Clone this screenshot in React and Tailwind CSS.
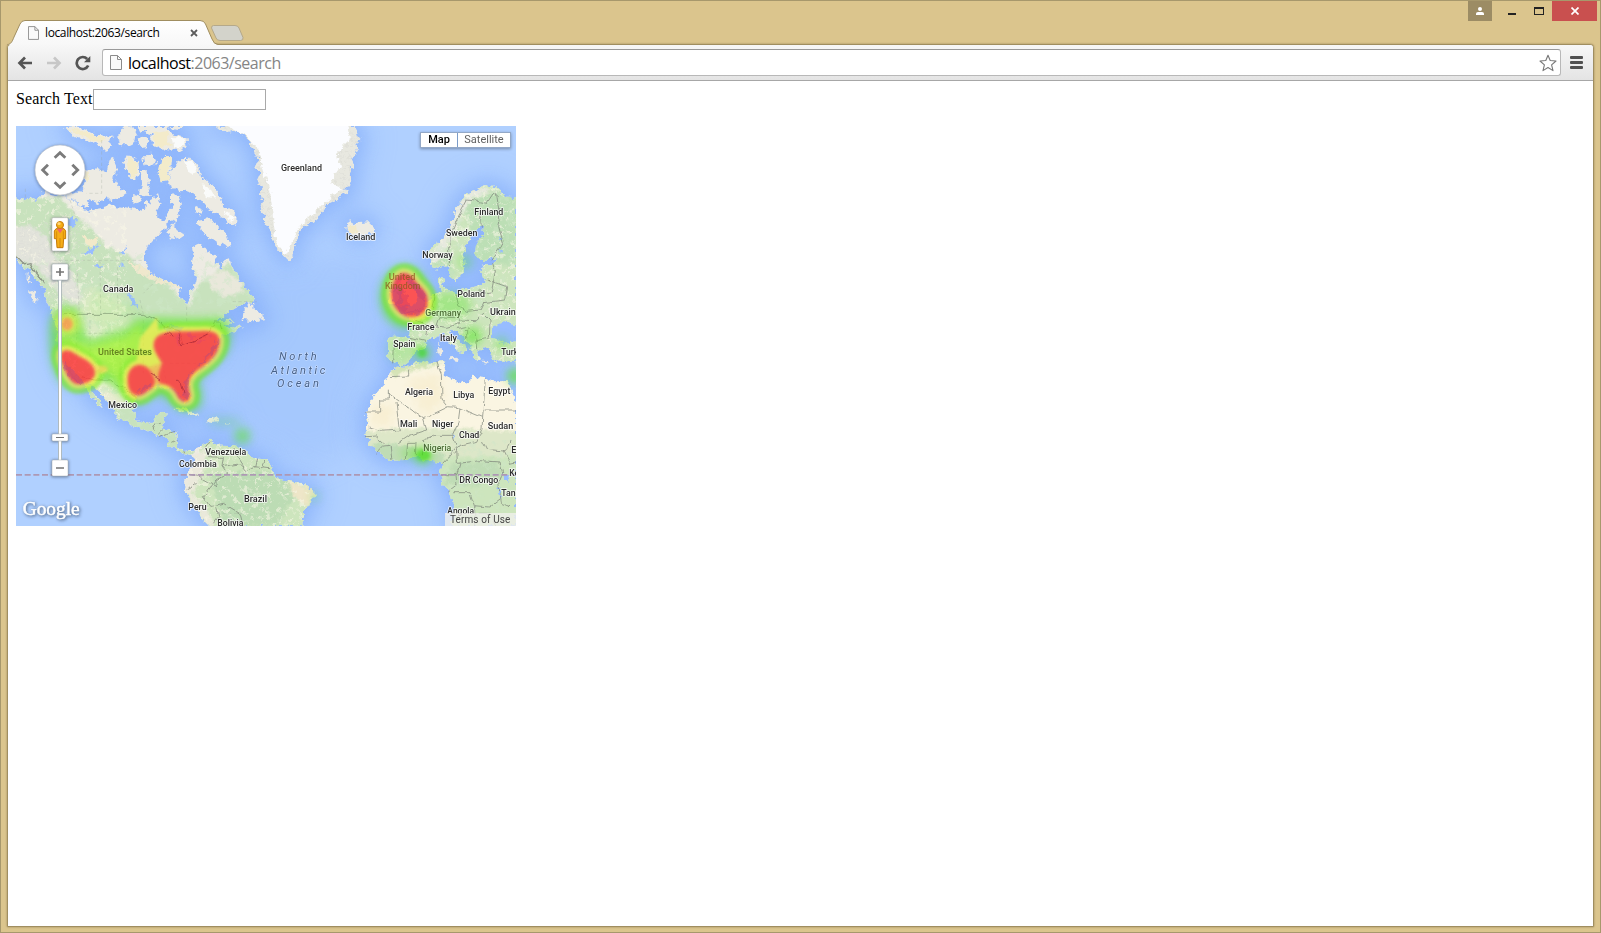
import React from "react";

const NORTH_AMERICA =
  "M0 222 L30 236 45 244 60 230 78 240 95 222 110 214 122 222 150 228 172 232 192 240 215 262 238 272 262 266 290 262 300 250 312 258 350 262 375 268 392 272 408 262 402 246 414 240 420 255 430 236 444 222 452 250 440 270 442 292 462 300 475 296 472 318 455 330 440 350 415 378 405 400 405 424 420 458 440 470 465 480 490 492 508 496 512 520 515 540 532 553 542 530 538 515 552 500 558 470 545 440 550 400 545 382 562 374 580 378 592 396 615 402 618 430 632 446 645 420 660 415 664 440 682 458 686 484 700 492 712 510 732 530 725 545 690 556 668 568 640 585 622 602 640 604 650 598 668 600 645 618 665 630 690 612 695 622 655 642 640 640 625 658 628 680 612 705 590 730 562 762 540 785 532 800 545 828 540 846 524 846 508 822 495 802 470 806 445 798 420 812 400 812 378 826 365 858 372 886 385 906 410 912 428 906 438 884 464 876 470 882 460 906 455 922 478 930 500 938 500 960 502 980 520 990 540 986 552 996 548 1008 520 1002 500 990 480 980 472 960 450 948 425 938 400 926 380 924 350 908 318 892 314 870 296 850 275 822 248 796 236 790 250 822 268 845 278 862 262 855 246 830 232 810 226 790 205 782 182 768 166 736 150 700 142 660 138 620 130 590 118 560 108 530 100 500 76 478 60 450 40 440 20 416 0 410 Z";
const ISLANDS = [
  "M215 150 L240 152 262 145 290 160 298 120 312 114 320 150 310 175 325 200 350 220 320 240 290 235 262 250 240 240 222 240 212 220 225 190 214 170Z",
  "M150 226 L165 212 190 222 206 215 232 232 238 262 215 258 190 236Z",
  "M165 22 L195 18 232 30 262 44 310 50 298 62 300 86 280 90 262 74 240 62 220 62 185 42Z",
  "M325 50 L340 22 368 18 380 40 375 70 352 76 330 76Z",
  "M385 60 L398 50 414 62 412 82 392 84Z",
  "M425 30 L470 26 480 40 500 46 530 55 532 78 510 90 470 88 440 82 424 60Z",
  "M380 18 L480 18 470 34 430 42 392 30Z",
  "M482 18 L520 18 512 30 490 28Z",
  "M350 106 L368 110 385 122 388 160 378 178 360 172 352 150 338 134Z",
  "M396 106 L432 104 438 130 420 140 400 136Z",
  "M392 150 L410 150 412 170 420 190 412 215 425 226 402 232 390 222 396 190Z",
  "M370 222 L390 226 395 244 380 250 368 240Z",
  "M455 112 L486 112 484 150 474 180 452 184 446 160Z",
  "M486 150 L510 118 540 116 556 128 566 148 570 172 588 178 606 196 622 216 636 236 640 260 660 266 680 290 678 318 655 308 640 290 615 280 598 268 582 248 562 240 556 222 530 212 510 214 492 205 470 190Z",
  "M480 224 L506 222 516 250 500 276 510 290 496 306 475 300 470 280 486 262 480 240Z",
  "M470 326 L490 310 500 330 520 344 515 360 498 350 480 356Z",
  "M560 260 L575 268 570 282 556 278Z",
  "M558 304 L580 300 600 296 618 310 632 326 645 336 650 352 662 366 650 384 630 372 608 356 588 350 575 330Z",
  "M700 575 L716 548 732 548 735 572 758 582 748 602 725 604 698 600Z",
  "M756 582 L762 600 752 606Z",
  "M60 510 L72 520 82 534 78 545 62 530Z",
  "M50 460 L62 476 58 486 50 478Z",
  "M490 864 L520 862 552 874 572 888 548 886 520 874Z",
  "M588 894 L615 894 626 904 605 906 590 902Z",
  "M646 906 L656 906 656 910 646 910Z",
  "M1008 306 L1024 300 1030 316 1050 306 1076 304 1095 324 1080 342 1052 350 1026 342 1010 332Z",
  "M1170 484 L1186 470 1200 480 1210 500 1225 530 1246 548 1238 566 1200 574 1186 580 1200 556 1190 530Z",
  "M1140 520 L1162 512 1168 540 1150 556 1136 550Z",
  "M1284 684 L1292 684 1294 704 1286 706Z",
  "M1320 712 L1344 710 1340 724 1322 720Z",
  "M1416 722 L1440 724 1438 728 1418 727Z",
  "M1284 662 L1290 668 1287 680Z",
];
const GREENLAND =
  "M618 18 L640 36 672 32 700 44 722 66 730 92 748 116 736 142 752 160 742 182 760 204 746 224 764 240 752 262 766 284 762 304 778 330 790 362 806 392 832 420 842 420 850 394 856 362 872 334 896 312 916 304 932 276 952 250 980 240 1016 214 1000 204 1024 196 1022 160 1030 134 1020 114 1040 96 1036 76 1054 60 1040 44 1034 18 Z";
const SOUTH_AMERICA =
  "M546 1000 L560 984 578 974 600 962 606 975 636 974 668 976 690 984 716 1006 742 1016 770 1018 784 1040 790 1068 810 1078 850 1086 884 1094 912 1112 914 1130 896 1158 882 1176 880 1218 600 1218 575 1190 556 1166 538 1138 524 1106 522 1080 534 1062 548 1040 556 1020 Z";
const AFRICA =
  "M1160 740 L1196 740 1222 728 1262 728 1302 724 1308 748 1300 766 1338 782 1372 794 1386 770 1420 774 1450 784 1490 784 1500 800 1518 840 1518 1218 1326 1218 1334 1180 1322 1120 1298 1090 1290 1060 1298 1030 1270 1026 1240 1020 1222 1008 1180 1020 1136 1022 1108 1000 1080 970 1066 944 1076 916 1068 880 1086 836 1116 804 1130 776 1146 752 Z";
const EUROPE =
  "M1518 232 L1490 230 1462 204 1440 198 1420 196 1396 214 1372 220 1354 246 1336 266 1330 296 1316 330 1308 352 1266 380 1256 404 1262 438 1280 450 1304 432 1314 436 1320 470 1340 482 1358 460 1366 430 1360 400 1372 370 1392 330 1420 314 1416 350 1398 372 1396 400 1408 420 1440 418 1460 414 1450 432 1420 434 1414 460 1426 480 1404 498 1376 504 1340 520 1310 512 1296 500 1308 474 1288 470 1286 500 1290 516 1270 526 1246 550 1228 574 1196 582 1200 602 1198 630 1200 652 1148 650 1134 660 1136 716 1156 730 1180 736 1202 720 1214 696 1244 686 1250 660 1280 650 1300 640 1314 664 1344 684 1354 704 1360 694 1376 688 1352 668 1328 644 1318 624 1340 634 1366 660 1384 684 1390 706 1402 726 1412 714 1404 694 1426 684 1444 690 1442 714 1470 724 1518 730 Z";

const LABELS = [
  ["Canada", 279, 515, 91],
  ["Greenland", 813, 152, 123],
  ["Iceland", 1008, 360, 88],
  ["Finland", 1393, 284, 87],
  ["Sweden", 1308, 347, 94],
  ["Norway", 1237, 413, 91],
  ["Poland", 1342, 530, 83],
  ["Ukraine", 1440, 584, 92],
  ["France", 1192, 629, 82],
  ["Spain", 1150, 680, 66],
  ["Italy", 1290, 662, 51],
  ["Turkey", 1474, 704, 76],
  ["Algeria", 1185, 824, 84],
  ["Libya", 1330, 833, 63],
  ["Egypt", 1435, 821, 66],
  ["Mali", 1170, 920, 52],
  ["Niger", 1266, 920, 64],
  ["Sudan", 1433, 926, 77],
  ["Chad", 1347, 953, 61],
  ["Ethiopia", 1504, 998, 100],
  ["DR Congo", 1348, 1088, 117],
  ["Kenya", 1498, 1069, 70],
  ["Tanzania", 1474, 1127, 106],
  ["Angola", 1312, 1182, 80],
  ["Mexico", 295, 864, 86],
  ["Venezuela", 586, 1004, 123],
  ["Colombia", 507, 1040, 113],
  ["Brazil", 702, 1145, 69],
  ["Peru", 535, 1169, 55],
  ["Bolivia", 622, 1217, 78],
];
const TINTED = [
  ["United States", 264, 704, 162],
  ["United", 1136, 479, 80],
  ["Kingdom", 1125, 506, 106],
  ["Germany", 1246, 587, 107],
  ["Nigeria", 1240, 992, 84],
];

const RED_EAST =
  "M440 655 C460 630 520 638 570 636 C610 632 632 642 625 675 C618 710 590 728 560 750 C535 768 528 790 536 815 C545 845 520 850 507 832 C495 805 480 792 450 788 C440 770 450 752 458 728 C445 705 422 680 440 655Z";
const RED_TEXAS =
  "M372 742 C392 728 422 742 432 778 C438 800 415 806 402 818 C380 832 358 820 356 790 C354 770 356 752 372 742Z";
const RED_WEST =
  "M156 700 C170 684 188 700 212 714 C238 726 256 744 252 764 C245 784 225 788 208 790 C185 792 170 760 162 735 C156 722 152 712 156 700Z";
const RED_UK =
  "M1176 462 C1196 458 1208 474 1220 492 C1238 510 1254 522 1250 552 C1246 580 1226 590 1196 588 C1166 582 1142 548 1146 514 C1150 492 1156 470 1176 462Z";
const HEAT = [RED_EAST, RED_TEXAS, RED_WEST, RED_UK];

function PageIcon({ className }) {
  return (
    <svg className={className} viewBox="0 0 12 15" fill="none">
      <path d="M.5.5h7l4 4v10H.5z" fill="#fafafa" stroke="#8b8b8b" />
      <path d="M7.5.5v4h4" stroke="#8b8b8b" />
    </svg>
  );
}

function Label({ l, fill, halo }) {
  return (
    <text
      x={l[1]}
      y={l[2]}
      textLength={l[3]}
      lengthAdjust="spacingAndGlyphs"
      fill={fill}
      stroke={halo}
      strokeWidth="5"
      strokeLinejoin="round"
      paintOrder="stroke"
    >
      {l[0]}
    </text>
  );
}

function Land() {
  return (
    <>
      <path d={NORTH_AMERICA} />
      <path d={SOUTH_AMERICA} />
      <path d={AFRICA} />
      <path d={EUROPE} />
      <path d={GREENLAND} />
      {ISLANDS.map((d) => (
        <path key={d} d={d} />
      ))}
    </>
  );
}

function WorldMap() {
  return (
    <svg className="block h-[400px] w-[500px]" viewBox="18 18 1500 1200">
      <defs>
        <filter id="rough" x="-5%" y="-5%" width="110%" height="110%">
          <feTurbulence type="fractalNoise" baseFrequency=".06" numOctaves="3" seed="4" />
          <feDisplacementMap in="SourceGraphic" scale="22" xChannelSelector="R" yChannelSelector="G" />
          <feGaussianBlur stdDeviation=".9" />
        </filter>
        <filter id="roughLine" x="-5%" y="-5%" width="110%" height="110%">
          <feTurbulence type="fractalNoise" baseFrequency=".04" numOctaves="2" seed="9" />
          <feDisplacementMap in="SourceGraphic" scale="16" xChannelSelector="R" yChannelSelector="G" />
        </filter>
        <filter id="reliefDark" x="0" y="0" width="100%" height="100%">
          <feTurbulence type="fractalNoise" baseFrequency=".045" numOctaves="4" seed="12" />
          <feColorMatrix values="0 0 0 0 .62  0 0 0 0 .8  0 0 0 0 .58  5 0 0 0 -2.6" />
        </filter>
        <filter id="reliefLight" x="0" y="0" width="100%" height="100%">
          <feTurbulence type="fractalNoise" baseFrequency=".06" numOctaves="4" seed="31" />
          <feColorMatrix values="0 0 0 0 .95  0 0 0 0 .93  0 0 0 0 .8  0 6 0 0 -3.3" />
        </filter>
        <filter id="hills" x="0" y="0" width="100%" height="100%">
          <feTurbulence type="fractalNoise" baseFrequency=".11" numOctaves="3" seed="7" />
          <feColorMatrix values="0 0 0 0 .7  0 0 0 0 .7  0 0 0 0 .66  0 0 6 0 -3.2" />
        </filter>
        <filter id="b6" x="-30%" y="-30%" width="160%" height="160%"><feGaussianBlur stdDeviation="5" /></filter>
        <filter id="b14" x="-60%" y="-60%" width="220%" height="220%"><feGaussianBlur stdDeviation="12" /></filter>
        <filter id="b30" x="-30%" y="-30%" width="160%" height="160%"><feGaussianBlur stdDeviation="26" /></filter>
        <filter id="b60" x="-30%" y="-30%" width="160%" height="160%"><feGaussianBlur stdDeviation="42" /></filter>
        <clipPath id="mainland">
          <path d={NORTH_AMERICA} />
          <path d={SOUTH_AMERICA} />
          <path d={AFRICA} />
          <path d={EUROPE} />
        </clipPath>
        <clipPath id="americaClip"><path d={NORTH_AMERICA} /></clipPath>
        <clipPath id="africaClip"><path d={AFRICA} /></clipPath>
        <clipPath id="greenlandClip"><path d={GREENLAND} /></clipPath>
      </defs>

      {/* Ocean, darker over the continental shelves */}
      <rect x="18" y="18" width="1500" height="1200" fill="#b0d0ff" />
      <path d="M640 440 800 430 1130 400 1130 640 1040 800 1020 980 900 1040 760 980 600 880 640 700Z" fill="#9fc3fd" opacity=".6" filter="url(#b60)" />
      <g fill="#86b0fb" stroke="#86b0fb" strokeWidth="50" opacity=".5" filter="url(#b60)">
        <Land />
      </g>
      <g fill="#86aefa" stroke="#86aefa" strokeWidth="16" opacity=".62" filter="url(#b30)">
        <Land />
      </g>

      {/* Land masses */}
      <g filter="url(#rough)">
        <g fill="#edebe3"><Land /></g>
        <g clipPath="url(#mainland)">
          <path d="M600 900H1518V1218H500Z M1100 180H1518V740H1100Z" fill="#cde5bd" />
          <g clipPath="url(#americaClip)">
            <path d="M0 222 L90 236 150 228 200 290 250 330 290 380 350 400 400 450 480 500 540 560 560 500 600 470 650 430 760 500 760 1020 0 1020Z" fill="#c8e2bd" filter="url(#b6)" />
            <path d="M0 320 60 318 110 350 130 400 180 450 220 540 190 560 130 500 80 440 0 410Z" fill="#e2e3db" filter="url(#b6)" />
            <path d="M240 500 330 530 360 580 340 690 230 730 170 640 190 590Z" fill="#e2ebcf" filter="url(#b14)" />
            <path d="M230 780 330 780 350 850 300 860Z" fill="#e9ecd2" filter="url(#b6)" />
            <path d="M600 460 640 450 690 480 700 520 640 530 590 490Z" fill="#e9e8db" filter="url(#b6)" />
            <path d="M355 425 410 445 500 490 510 505 450 490 380 460Z" fill="#f0e8cd" />
          </g>
          <g clipPath="url(#africaClip)">
            <path d="M1050 720H1518V940H1050Z" fill="#faf5e2" />
            <path d="M1060 936 Q1200 915 1518 934 V1010H1060Z" fill="#dde7c8" filter="url(#b6)" />
            <path d="M1090 970 1180 975 1300 1000 1300 1040 1100 1040Z M1330 1030 1460 1022 1480 1070 1400 1100 1300 1090Z" fill="#bfdcb5" filter="url(#b6)" />
            <path d="M1130 745 1220 728 1300 724 1290 738 1200 750 1150 770Z" fill="#d5e3b7" filter="url(#b6)" />
            <path d="M1190 780 1290 760 1300 850 1240 890Z M1090 860 1150 850 1150 920 1080 915Z" fill="#f8efd3" filter="url(#b14)" />
          </g>
          <path d="M1360 250 1460 210 1518 232 1518 440 1400 420Z M1260 420 1320 400 1330 480Z" fill="#bcdfb5" filter="url(#b6)" />
          <path d="M1230 440 1280 380 1330 260 1400 200 1450 210 1380 240 1330 340 1290 420Z" fill="#e7e9df" filter="url(#b6)" />
          <path d="M600 1060 780 1050 870 1100 800 1218 640 1218Z" fill="#bcdcb4" filter="url(#b6)" />
          <path d="M830 1080 920 1110 890 1160 850 1130Z" fill="#eee6c8" filter="url(#b6)" />
          <path d="M550 1010 590 980 580 1060 545 1120 610 1200 600 1230 520 1110Z" fill="#ebe9dc" filter="url(#b6)" />
          <rect x="18" y="400" width="900" height="560" filter="url(#reliefDark)" opacity=".5" />
          <rect x="500" y="950" width="450" height="270" filter="url(#reliefLight)" opacity=".55" />
          <rect x="1100" y="180" width="418" height="560" filter="url(#reliefDark)" opacity=".45" />
          <rect x="1100" y="180" width="418" height="560" filter="url(#reliefLight)" opacity=".55" />
          <rect x="18" y="220" width="330" height="700" filter="url(#reliefLight)" opacity=".6" />
          <rect x="18" y="310" width="190" height="420" filter="url(#hills)" opacity=".38" />
          <rect x="1290" y="960" width="228" height="258" filter="url(#reliefDark)" opacity=".4" />
        </g>
        <path d="M455 112 486 112 480 150 474 180 452 184 446 160Z M350 110 384 124 380 170 360 168Z M170 26 230 36 290 56 270 66 220 52Z M215 155 240 165 230 195Z M425 40 470 34 482 80 440 78Z" fill="#f3ebca" />
        <path d="M485 50 525 56 528 76 490 84Z M520 120 550 125 562 160 540 165Z M572 190 600 204 618 236 590 230Z M640 268 676 296 660 304Z" fill="#fafbfa" />
        <path d="M215 345 245 360 266 350 255 382 230 375Z M1010 318 1040 318 1044 338 1020 336Z" fill="#f2e9c9" />
        {/* Greenland ice sheet with a bare rocky rim */}
        <path d={GREENLAND} fill="#e8e8e0" />
        <g clipPath="url(#greenlandClip)">
          <rect x="600" y="18" width="470" height="420" filter="url(#hills)" opacity=".55" />
        </g>
        <path d="M630 10 672 30 712 50 746 90 762 160 780 210 790 300 800 370 830 404 848 360 870 316 915 280 960 232 1000 206 960 190 990 140 980 100 1020 60 1010 10Z" fill="#fbfcff" />
      </g>

      {/* Lakes and inland seas */}
      <g filter="url(#rough)" fill="#98bdff">
        <path d="M175 300 190 290 202 300 186 324 174 318Z M216 400 240 384 270 374 240 404Z M352 520 366 530 386 566 370 560Z M250 438 284 430 262 440Z M326 400 350 380 344 400Z M330 424 340 444 334 440Z" />
        <path d="M455 628 490 614 520 626 500 634Z M500 640 512 640 510 670 500 672Z M540 634 556 650 545 660 530 640Z M555 668 584 656 575 668Z M596 650 615 646 604 654Z" />
        <path d="M1446 620 1480 606 1518 616 1518 664 1480 668 1446 656Z M1480 1062 1496 1062 1494 1088 1484 1082Z M1464 1100 1474 1120 1472 1138Z M1324 940 1336 948 1330 956Z M1466 350 1480 352 1474 364Z M1464 390 1480 386 1482 398Z" />
        <path d="M1500 790 1518 850 1518 795Z" />
      </g>

      {/* Country and state borders */}
      <g filter="url(#roughLine)" fill="none" stroke="#7c8278" strokeWidth="2.6" opacity=".8">
        <path d="M18 410 40 432 60 428 76 458 100 490" strokeWidth="4" />
        <path d="M158 583H400L420 592 445 600 462 620 505 632 520 672 560 660 590 648 612 606 628 606 636 630" />
        <path d="M216 770 250 780 302 780 326 800 346 802 382 836" />
        <path d="M428 930 438 910 452 910M440 945 456 928M446 950 470 940 498 934M484 970 500 962M520 990 524 1000" />
        <path d="M600 964 588 984 596 1010 640 1012 636 1040 650 1060 618 1080 618 1100 560 1066 536 1060M618 1080 580 1130 600 1160 640 1150 690 1180 700 1218M530 1106 560 1090M700 1040 680 1010 672 984M636 1040 690 1032 706 1054 730 1040 780 1046M740 1016 734 1042M764 1020 758 1046M620 1162 626 1190 610 1210" />
        <path d="M1136 770 1196 768 1196 746M1138 806V840H1112V876H1068M1138 822 1240 896 1316 860 1344 862 1418 892 1426 776M1158 846 1168 930 1110 934 1076 924M1240 896 1250 930 1230 936 1200 946 1168 968M1280 726 1294 760 1296 840 1312 860M1350 864 1344 910 1328 946 1270 946 1236 960M1418 892 1416 930 1400 964 1350 976 1334 1000M1424 870H1518M1416 960 1430 988 1490 994 1500 960M1068 950 1100 948 1124 970M1100 1000 1120 978 1140 976 1146 1020M1186 1016 1190 970 1216 970M1216 1008 1218 966M1240 1006 1244 960M1328 946 1340 980 1316 1010 1298 1030M1340 980 1342 1030 1410 1022 1470 1026 1478 1060 1466 1090 1474 1150 1500 1160M1296 1064H1340L1350 1030M1334 1060 1338 1096 1312 1116M1330 1118H1380L1394 1160 1440 1164 1470 1140M1394 1160V1218M1480 990 1500 1030 1518 1026M1406 1180 1440 1180 1460 1218" />
        <path d="M1318 436 1320 350 1340 300 1372 240 1402 244 1430 250 1450 220 1466 230M1460 226 1470 300 1466 320 1480 370 1446 418M1414 320 1412 290 1400 270M1448 430 1456 456 1450 486 1430 480M1450 486 1444 516 1420 520 1408 510M1422 546 1410 570 1370 574 1346 560 1338 520M1450 486 1490 500 1484 540 1420 548M1274 520 1266 560 1290 590 1280 620M1212 600 1256 616 1250 646M1200 652 1248 664M1150 670 1148 730M1290 590 1346 594 1352 610 1310 622 1280 618M1352 600 1400 602 1420 580 1440 600 1438 650M1340 626 1370 620 1396 640 1400 690M1370 630 1370 660M1396 662 1440 654" />
      </g>
      <g stroke="#96a293" strokeWidth="1.6" strokeDasharray="10 7" opacity=".5">
        <path fill="none" d="M130 421H400M275 60V220H230M46 206V240M202 460 208 583M270 421 272 583M322 440 324 583M390 540 400 583M180 240 200 300M668 545H740M440 480 400 520M530 560V610M200 600V730M240 600V720M200 640H400M240 690H380M330 640V770M400 600V760M350 740H440M450 700 470 790M480 730H560M620 1180H700" />
      </g>

      {/* Equator */}
      <path d="M18 1064.5H1518" stroke="#ad98b4" strokeWidth="5" strokeDasharray="18 8" />

      {/* Heat layer */}
      <g opacity=".7">
        <g fill="#5ee52d" filter="url(#b14)">
          <path d="M120 650 C115 560 160 545 205 570 L235 660 365 622 C375 580 470 596 560 596 L630 592 C670 605 670 680 640 710 L565 780 C585 840 580 875 530 872 C485 870 470 820 440 825 L400 850 C360 860 335 820 300 790 L250 775 C240 800 200 815 160 795 C130 760 120 720 120 650Z" opacity=".95" />
          <path d="M250 500 380 560 420 620 280 640 220 580Z" opacity=".2" />
          <ellipse cx="1184" cy="530" rx="74" ry="94" />
          <circle cx="1236" cy="698" r="24" />
          <circle cx="1238" cy="1006" r="27" />
          <ellipse cx="1205" cy="1000" rx="34" ry="16" opacity=".5" />
          <circle cx="697" cy="948" r="25" opacity=".75" />
          <ellipse cx="645" cy="905" rx="50" ry="14" opacity=".3" />
          <circle cx="1515" cy="768" r="24" />
          <ellipse cx="1320" cy="556" rx="64" ry="40" opacity=".55" />
          <circle cx="1388" cy="648" r="28" opacity=".85" />
          <ellipse cx="1170" cy="690" rx="36" ry="40" opacity=".3" />
          <circle cx="1365" cy="425" r="24" opacity=".45" />
          <circle cx="1474" cy="670" r="22" opacity=".5" />
          <circle cx="914" cy="1130" r="15" opacity=".35" />
        </g>
        <g fill="#3ce010" filter="url(#b6)">
          <circle cx="1236" cy="698" r="12" />
          <ellipse cx="1240" cy="1006" rx="20" ry="15" />
        </g>
        <path d="M150 650 L240 680 350 650 390 610 430 780 350 800 270 740 150 700Z" fill="#9df51e" filter="url(#b14)" />
        <g fill="#75ef00" stroke="#75ef00" strokeWidth="62" filter="url(#b6)" opacity=".75">{HEAT.map((d) => <path key={d} d={d} />)}</g>
        <g fill="#e9ef2d" stroke="#e9ef2d" strokeWidth="32" filter="url(#b6)">
          {HEAT.map((d) => <path key={d} d={d} />)}
          <path d="M396 720 405 660 430 630 450 780 400 760Z" />
        </g>
        <ellipse cx="268" cy="748" rx="26" ry="12" fill="#ecd92d" filter="url(#b6)" />
        <circle cx="171" cy="610" r="33" fill="#ddef25" filter="url(#b14)" />
        <ellipse cx="171" cy="612" rx="17" ry="19" fill="#ff8a25" filter="url(#b6)" />
        <g fill="#ff9d33" stroke="#ffae36" strokeWidth="9" filter="url(#b6)">
          {HEAT.map((d) => <path key={d} d={d} />)}
          <path d="M418 745 448 735 452 790 425 790Z" opacity=".8" />
        </g>
        <g fill="#ff2a30" filter="url(#b6)">{HEAT.map((d) => <path key={d} d={d} />)}</g>
      </g>
      <g fill="#ff3434" stroke="#ff3434" strokeWidth="2" opacity=".36" filter="url(#b6)">{HEAT.map((d) => <path key={d} d={d} />)}</g>
      <g fill="#b04a80" opacity=".42" filter="url(#rough)">
        <path d="M626 650 C630 690 600 715 560 742 C535 765 528 790 536 815 540 840 530 844 524 836 L518 790 540 760 590 710Z" />
        <path d="M162 720 190 750 214 778 222 788 C195 795 175 770 162 740Z M380 822 C395 815 405 805 430 800 L425 785 395 802Z" />
        <path d="M1150 500 1168 494 1180 520 1172 546 1166 556 1200 562 1224 546 1220 520 1204 500 1190 478 C1212 475 1252 520 1249 555 C1240 590 1190 590 1168 572 C1150 550 1144 530 1150 500Z" />
      </g>
      <g filter="url(#roughLine)" stroke="#9e2638" strokeWidth="3" fill="none" opacity=".65">
        <path d="M462 638 476 640 490 652M504 640 512 674 550 664 600 640M420 760 450 780M498 780 514 790 522 820" />
      </g>

      {/* Labels dimmed by the heat layer */}
      <g className="font-['Roboto'] font-medium" fontSize="25">
        {TINTED.slice(0, 1).map((l) => <Label key={l[0]} l={l} fill="#64831f" halo="#b8f05a55" />)}
        {TINTED.slice(1, 3).map((l) => <Label key={l[0]} l={l} fill="#8f5a20c8" halo="#ffffff00" />)}
        {TINTED.slice(3).map((l) => <Label key={l[0]} l={l} fill="#4b6b35" halo="#e8ffdc90" />)}
      </g>

      {/* Country names */}
      <g className="font-['Roboto'] font-medium" fontSize="25">
        {LABELS.map((l) => <Label key={l[0]} l={l} fill="#2b2b2b" halo="#ffffffc8" />)}
      </g>
      <g className="font-['Roboto'] italic" fontSize="33" fill="#466189" stroke="#cfe0ff" strokeWidth="3" paintOrder="stroke">
        <text x="807" y="719" textLength="113">North</text>
        <text x="783" y="761" textLength="163">Atlantic</text>
        <text x="801" y="800" textLength="126">Ocean</text>
      </g>

      {/* Pan control */}
      <circle cx="150" cy="152" r="77" fill="#36507a" opacity=".5" filter="url(#b6)" />
      <circle cx="150" cy="150" r="75" fill="#fff" stroke="#c0c4cb" strokeWidth="2" />
      <g fill="none" stroke="#7b7b7b" strokeWidth="8.5">
        <path d="M134 113 150 98 166 113M134 187 150 202 166 187M114 134 98 150 114 166M187 134 203 150 187 166" />
      </g>

      {/* Street view figure */}
      <rect x="124" y="293" width="52" height="103" rx="5" fill="#344" opacity=".55" filter="url(#b6)" />
      <rect x="126" y="293" width="48" height="100" rx="4" fill="#fff" stroke="#b7b7b7" strokeWidth="1.5" />
      <g stroke="#c77c08" strokeWidth="3" fill="#f5ad16">
        <path d="M138 326 L162 326 167 333 167 356 161 356 159 383 141 383 139 356 133 356 133 333Z" />
        <path d="M150 354V383M140 334V356M160 334V356" strokeWidth="2" />
        <circle cx="150" cy="315" r="10.5" />
      </g>
      <path d="M140 326H160L150 340Z" fill="#ef6868" />
      <ellipse cx="147" cy="311" rx="5" ry="4" fill="#ffd67a" />

      {/* Zoom slider */}
      <g fill="#3b4a5d" opacity=".6" filter="url(#b6)">
        <rect x="124" y="432" width="52" height="51" rx="5" />
        <rect x="124" y="1019" width="52" height="53" rx="5" />
        <rect x="124" y="941" width="52" height="25" rx="4" />
      </g>
      <rect x="145.500" y="480" width="9" height="542" fill="#fff" stroke="#a7b2b4" strokeWidth="2.500" />
      <g fill="#fff" stroke="#aab0b5" strokeWidth="1.5">
        <rect x="126" y="432" width="48" height="48" rx="4" />
        <rect x="126" y="1020" width="48" height="48" rx="4" />
        <rect x="126" y="942" width="48" height="21" rx="4" />
      </g>
      <g stroke="#747474" strokeWidth="5">
        <path d="M138 456H162M150 444V468M138 1044H162" />
        <path d="M138 952.500H162" strokeWidth="3" />
      </g>

      {/* Map provider wordmark */}
      <g className="font-['Liberation_Serif']" fontSize="59">
        <text x="41" y="1189" textLength="171" lengthAdjust="spacingAndGlyphs" fill="#4d6484" opacity=".75" filter="url(#b6)" stroke="#4d6484" strokeWidth="4">
          Google
        </text>
        <text x="38" y="1186" textLength="171" lengthAdjust="spacingAndGlyphs" fill="#fff" stroke="#fff" strokeWidth="1.5">
          Google
        </text>
      </g>
    </svg>
  );
}

function TabStrip() {
  return (
    <div className="flex h-[43px] justify-between pl-[6px] pr-[3px]">
      <div className="relative mt-[18px] h-[26px] w-[240px]">
        <svg className="absolute left-0 top-0 h-[26px] w-[240px]" viewBox="0 0 240 26">
          <defs>
            <linearGradient id="tab" x2="0" y2="1">
              <stop stopColor="#fff" />
              <stop offset="1" stopColor="#f7f7f7" />
            </linearGradient>
          </defs>
          <path d="M0 26 C4 25 5 23 7 18 L13 5 Q14.500 1.500 18 1.500 H193 Q197 1.500 198.500 5 L205 20 Q207 25.500 211 25.500 V27 H0Z" fill="url(#tab)" stroke="#a08e60" />
          <path d="M206.500 6.500H228Q231 6.500 232 9L236 18.500Q236.500 21.500 233.500 21.500H213Q210 21.500 209 19L204.500 9Q204.500 6.500 206.500 6.500Z" fill="#d3d3cb" stroke="#b5a98a" />
        </svg>
        <div className="relative flex h-full items-center pl-[21px]">
          <PageIcon className="mt-[2px] h-[14px] w-[11px]" />
          <span className="ml-[6px] mt-[2px] w-[144px] whitespace-nowrap font-['Open_Sans',sans-serif] text-[12px] leading-4 tracking-[-0.38px] text-black">
            localhost:2063/search
          </span>
          <svg className="ml-[1px] mt-[2px] h-[8px] w-[8px]" viewBox="0 0 8 8">
            <path d="M1 1l6 6M7 1L1 7" stroke="#5c5c5c" strokeWidth="1.8" />
          </svg>
        </div>
      </div>
      <div className="flex h-[20px]">
        <div className="flex w-[24px] items-center justify-center bg-[#9c8c64]">
          <svg className="h-[8px] w-[8px]" viewBox="0 0 8 8" fill="#fff">
            <circle cx="4" cy="2" r="2" />
            <path d="M0 8V6.500Q0 5 2 5H6Q8 5 8 6.500V8Z" />
          </svg>
        </div>
        <div className="ml-[16px] mt-[12px] h-[2px] w-[8px] bg-[#222]" />
        <div className="ml-[18px] mt-[6px] h-[8px] w-[10px] border border-t-2 border-[#222]" />
        <div className="ml-[8px] flex w-[45px] items-center justify-center bg-[#c9504f]">
          <svg className="h-[8px] w-[8px]" viewBox="0 0 8 8">
            <path d="M.5.5l7 7M7.500.5l-7 7" stroke="#fff" strokeWidth="1.700" />
          </svg>
        </div>
      </div>
    </div>
  );
}

function Toolbar() {
  return (
    <div className="flex h-[36px] items-center rounded-t-[3px] border-b border-[#a7a7a7] bg-linear-to-b from-[#f7f7f7] to-[#e4e4e4] pl-[9px] pr-[10px]">
      <svg className="h-[14px] w-[16px]" viewBox="0 0 16 14">
        <path d="M15 7H2.500M8 1.500L2.500 7 8 12.500" fill="none" stroke="#555" strokeWidth="2.700" />
      </svg>
      <svg className="ml-[13px] h-[14px] w-[16px]" viewBox="0 0 16 14">
        <path d="M1 7H13.500M8 1.500L13.500 7 8 12.500" fill="none" stroke="#c7c7c7" strokeWidth="2.700" />
      </svg>
      <svg className="ml-[13px] h-[16px] w-[16px]" viewBox="0 0 16 16">
        <path d="M13.200 10.500A6 6 0 1 1 12.200 4" fill="none" stroke="#555" strokeWidth="2.700" />
        <path d="M15.300 1V7.300H9Z" fill="#555" />
      </svg>
      <div className="ml-[11px] flex h-[27px] flex-1 items-center rounded-[3px] border border-[#b8b8b8] border-t-[#999] bg-white pl-[7px] pr-[3px]">
        <PageIcon className="h-[15px] w-[12px]" />
        <div className="ml-[6px] flex-1 font-['Open_Sans',sans-serif] text-[16px] leading-[22px] tracking-[-0.5px] text-[#858585]">
          <span className="text-black">localhost</span>:2063/search
        </div>
        <svg className="h-[18px] w-[18px]" viewBox="0 0 18 18">
          <path d="M9 1.200L11.200 6.500 17 7 12.600 10.800 14 16.600 9 13.500 4 16.600 5.400 10.800 1 7 6.800 6.500Z" fill="#fff" stroke="#777" strokeWidth="1.100" strokeLinejoin="round" />
        </svg>
      </div>
      <div className="ml-[9px] flex flex-col gap-[2px]">
        <div className="h-[3px] w-[13px] rounded-[1px] bg-[#505050]" />
        <div className="h-[3px] w-[13px] rounded-[1px] bg-[#505050]" />
        <div className="h-[3px] w-[13px] rounded-[1px] bg-[#505050]" />
      </div>
    </div>
  );
}

export default function App() {
  return (
    <div className="flex h-[933px] w-[1601px] flex-col overflow-hidden border border-[#a7986c] bg-[#dbc58d]">
      <TabStrip />
      <div className="mx-[6px] mb-[5px] flex min-h-0 flex-1 flex-col rounded-t-[4px] border border-[#a08e60] bg-white shadow-[0_0_2px_#927f50]">
        <Toolbar />
        <main className="flex flex-col items-start pl-[8px] pt-[8px]">
          <label className="flex h-[21px] items-center font-['Liberation_Serif',serif] text-[16px] text-black">
            <span className="-mt-px w-[77px] whitespace-nowrap tracking-[0.1px]">Search Text</span>
            <input className="h-[21px] w-[173px] border border-[#a9a9a9] bg-white px-1 outline-none" />
          </label>
          <div className="relative mt-[16px] h-[400px] w-[500px] overflow-hidden">
            <WorldMap />
            <div className="absolute right-[5px] top-[6px] flex h-[16px] border border-[#93a8c7] bg-white font-['Roboto',sans-serif] text-[11px] leading-[14px] shadow-[0_1px_3px_#0005]">
              <button className="w-[37px] border-r border-[#7b9cc9] font-medium text-black">Map</button>
              <button className="w-[52px] text-[#606060]">Satellite</button>
            </div>
            <div className="absolute bottom-0 right-0 h-[13px] w-[71px] bg-[#f0f0ebcc] pl-[5px] font-['Roboto',sans-serif] text-[10px] leading-[13px] tracking-[0.1px] whitespace-nowrap text-[#444]">
              Terms of Use
            </div>
          </div>
        </main>
      </div>
    </div>
  );
}
